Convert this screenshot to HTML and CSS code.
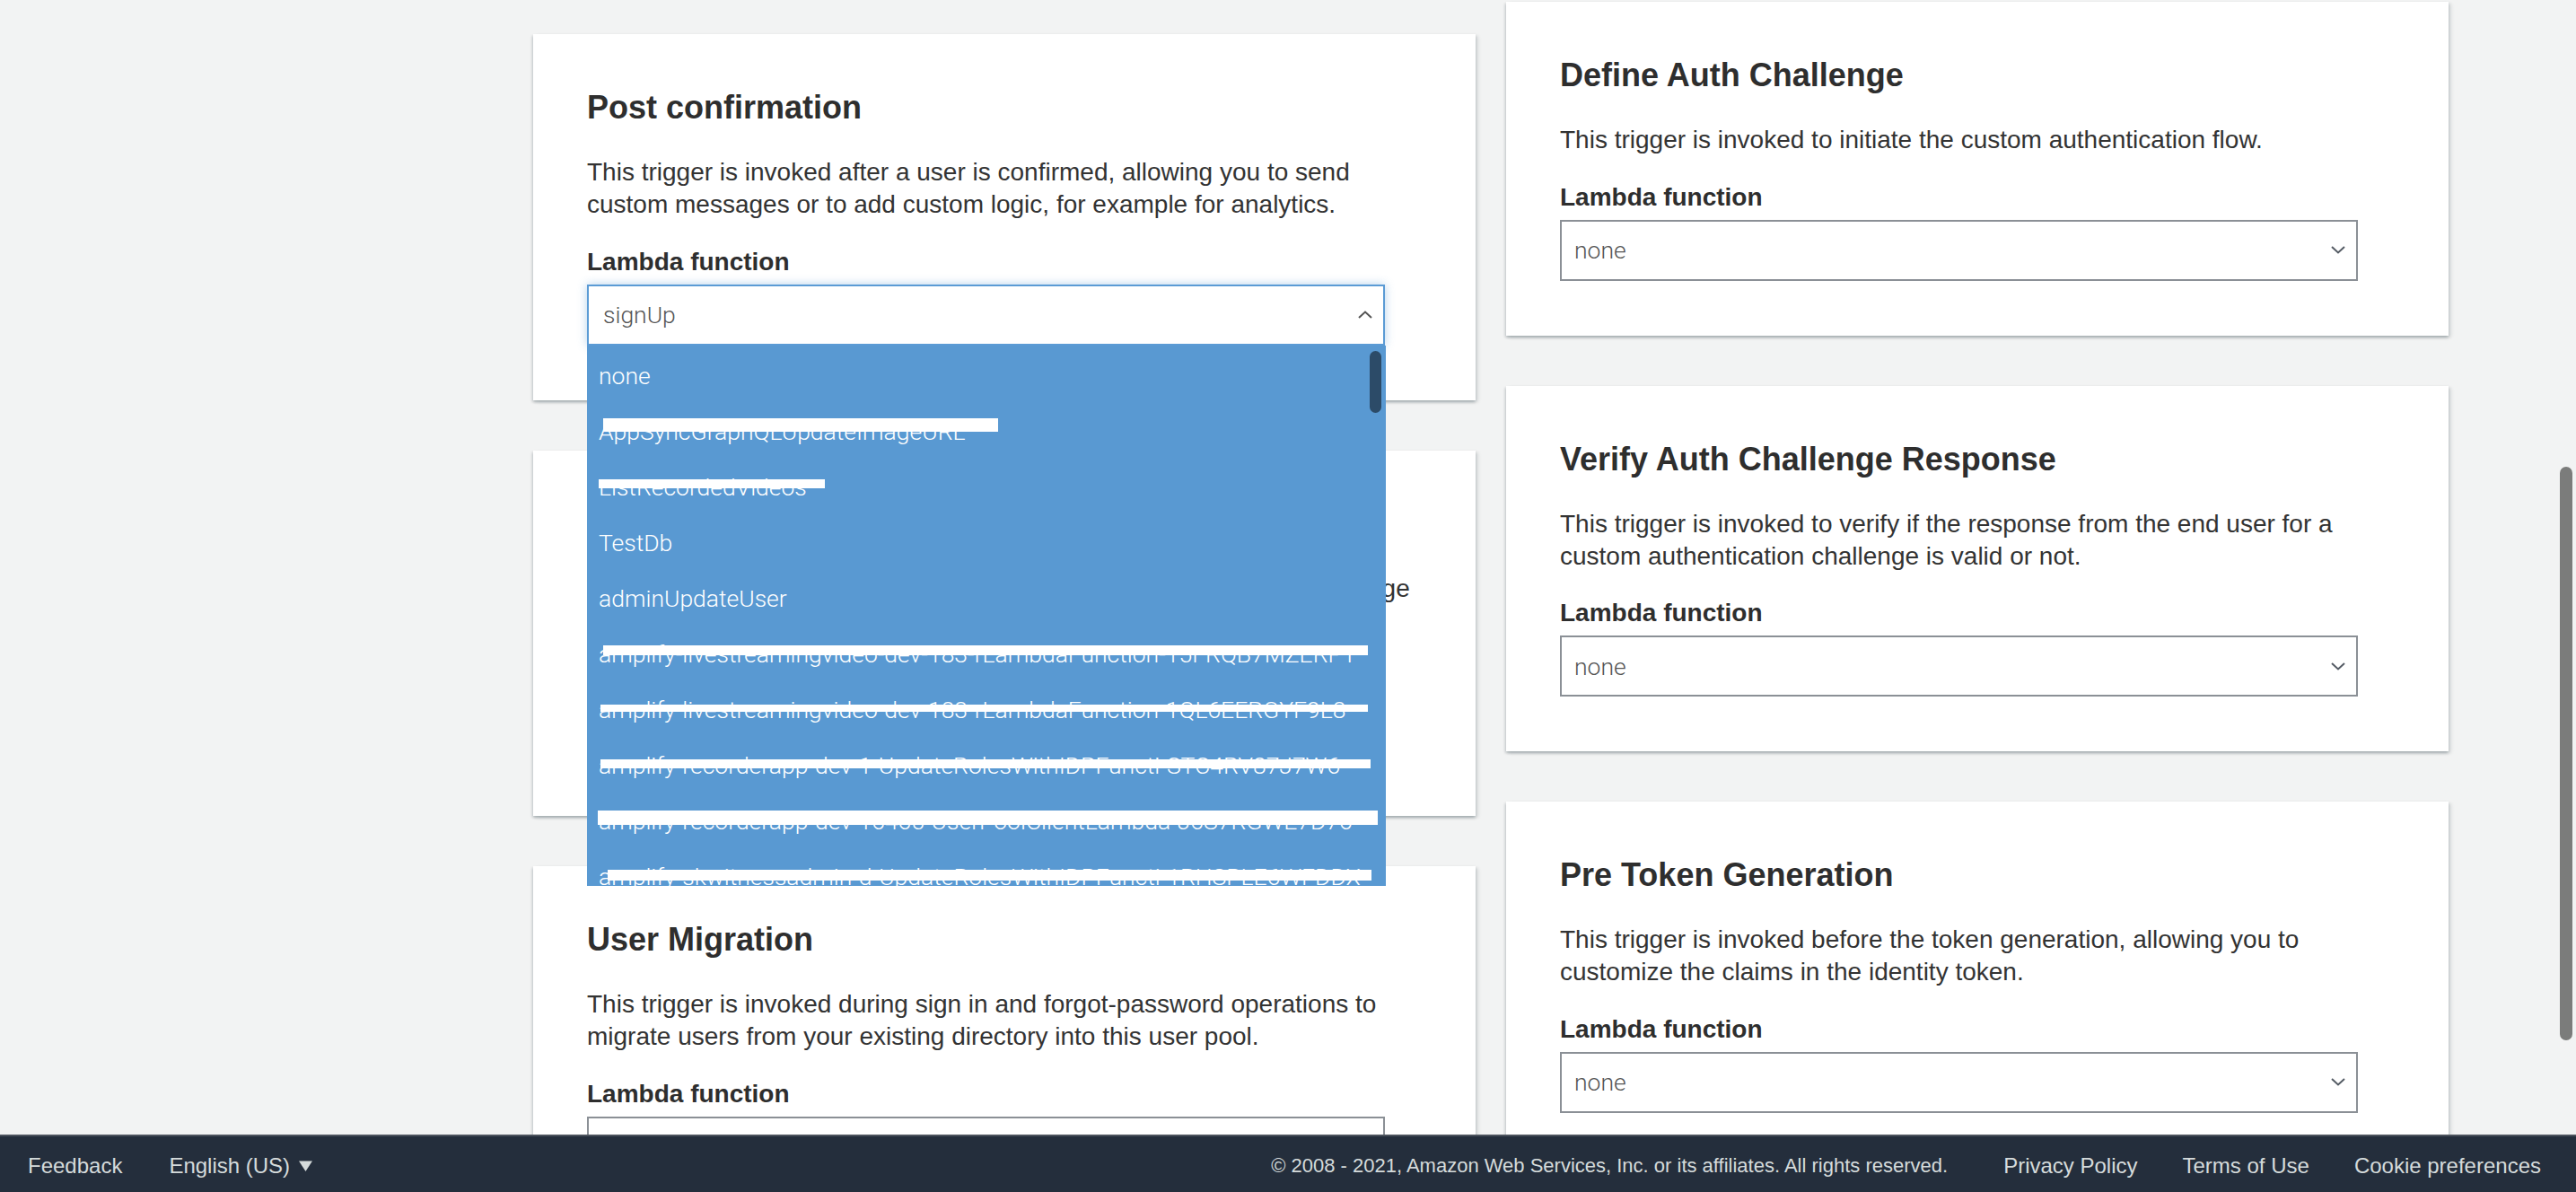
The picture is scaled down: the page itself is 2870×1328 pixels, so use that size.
FILE: index.html
```html
<!DOCTYPE html>
<html lang="en">

<head>
    <meta charset="UTF-8">
    <meta name="viewport" content="width=device-width, initial-scale=1.0">
    <title>Triggers</title>
    <link rel="stylesheet" href="styles.css">
</head>
<body>
    <div class="console">
        <main class="triggers">
            <div class="col col-left">
                <section class="card">
                    <h2>Post confirmation</h2>
                    <p>This trigger is invoked after a user is confirmed, allowing you to send custom messages or to add custom logic, for example for analytics.</p>
                    <label>Lambda function</label>
                    <div class="select-wrap">
                        <div class="select open">
                            <span>signUp</span>
                            <svg width="16" height="9" viewBox="0 0 16 9"><path d="M1 8 L8 1.5 L15 8" fill="none" stroke="#545454" stroke-width="2"/></svg>
                        </div>
                        <div class="dropdown">
                            <ul class="options">
                                <li>none</li>
                                <li>AppSyncGraphQLUpdateImageURL<span class="redact r1"></span></li>
                                <li>ListRecordedVideos<span class="redact r2"></span></li>
                                <li>TestDb</li>
                                <li>adminUpdateUser</li>
                                <li>amplify-livestreamingvideo-dev-183-rLambdaFunction-15FRQB7MZERPT<span class="redact r3"></span></li>
                                <li>amplify-livestreamingvideo-dev-183-rLambdaFunction-1QL6EERGYF9L8<span class="redact r4"></span></li>
                                <li>amplify-recorderapp-dev-1-UpdateRolesWithIDPFuncti-STC4RV87J7W6<span class="redact r5"></span></li>
                                <li>amplify-recorderapp-dev-16465-UserPoolClientLambda-J6S7RGWE7D76<span class="redact r6"></span></li>
                                <li>amplify-skwitnessadmin-d-UpdateRolesWithIDPFuncti-1RHSPLE6WFDDX<span class="redact r7"></span></li>
                                <li>amplify-skwitnessadmin-d-UserPoolClientLambda-9KQ2MW3ZT1AB</li>
                            </ul>
                            <div class="list-thumb"></div>
                        </div>
                    </div>
                </section>

                <section class="card">
                    <h2>Create Auth Challenge</h2>
                    <p>This trigger is invoked after Define Auth Challenge if the custom challenge has been specified as part of the Define Auth Challenge trigger.</p>
                    <label>Lambda function</label>
                    <div class="select">
                        <span>none</span>
                        <svg width="16" height="9" viewBox="0 0 16 9"><path d="M1 1 L8 7.5 L15 1" fill="none" stroke="#545b64" stroke-width="2"/></svg>
                    </div>
                </section>

                <section class="card">
                    <h2>User Migration</h2>
                    <p>This trigger is invoked during sign in and forgot-password operations to migrate users from your existing directory into this user pool.</p>
                    <label>Lambda function</label>
                    <div class="select">
                        <span>none</span>
                        <svg width="16" height="9" viewBox="0 0 16 9"><path d="M1 1 L8 7.5 L15 1" fill="none" stroke="#545b64" stroke-width="2"/></svg>
                    </div>
                </section>
            </div>

            <div class="col col-right">
                <section class="card">
                    <h2>Define Auth Challenge</h2>
                    <p>This trigger is invoked to initiate the custom authentication flow.</p>
                    <label>Lambda function</label>
                    <div class="select">
                        <span>none</span>
                        <svg width="16" height="9" viewBox="0 0 16 9"><path d="M1 1 L8 7.5 L15 1" fill="none" stroke="#545b64" stroke-width="2"/></svg>
                    </div>
                </section>

                <section class="card">
                    <h2>Verify Auth Challenge Response</h2>
                    <p>This trigger is invoked to verify if the response from the end user for a custom authentication challenge is valid or not.</p>
                    <label>Lambda function</label>
                    <div class="select">
                        <span>none</span>
                        <svg width="16" height="9" viewBox="0 0 16 9"><path d="M1 1 L8 7.5 L15 1" fill="none" stroke="#545b64" stroke-width="2"/></svg>
                    </div>
                </section>

                <section class="card">
                    <h2>Pre Token Generation</h2>
                    <p>This trigger is invoked before the token generation, allowing you to customize the claims in the identity token.</p>
                    <label>Lambda function</label>
                    <div class="select">
                        <span>none</span>
                        <svg width="16" height="9" viewBox="0 0 16 9"><path d="M1 1 L8 7.5 L15 1" fill="none" stroke="#545b64" stroke-width="2"/></svg>
                    </div>
                </section>
            </div>
        </main>

        <footer class="footer">
            <div class="footer-left">
                <a>Feedback</a>
                <a class="lang">English (US)
                    <svg width="17" height="14" viewBox="0 0 17 14"><path d="M1 1.5 L16 1.5 L8.5 13 Z" fill="#d5dbdb"/></svg>
                </a>
            </div>
            <div class="footer-right">
                <span class="copyright">&copy; 2008 - 2021, Amazon Web Services, Inc. or its affiliates. All rights reserved.</span>
                <a class="first">Privacy Policy</a>
                <a>Terms of Use</a>
                <a>Cookie preferences</a>
            </div>
        </footer>
    </div>

    <div class="page-thumb"></div>
</body>

</html>
```

FILE: styles.css
```css
html, body {
    margin: 0;
    height: 100%;
}

body {
    font-family: "Liberation Sans", Arial, sans-serif;
    background-color: #f2f3f3;
    color: #333;
    overflow: hidden;
}

.console {
    height: 100vh;
    display: flex;
    flex-direction: column;
}

.triggers {
    flex: 1;
    min-height: 0;
    overflow: hidden;
    display: flex;
    gap: 34px;
    padding-left: 594px;
}

.col {
    width: 1050px;
    flex-shrink: 0;
    display: flex;
    flex-direction: column;
    gap: 56px;
}

.col-left {
    padding-top: 38px;
}

.col-right {
    padding-top: 2px;
}

.card {
    background-color: #fff;
    padding: 60px 60px 61px;
    box-shadow: 0 2px 3px rgba(0, 28, 36, 0.22), 3px 2px 4px rgba(0, 28, 36, 0.1), -2px 2px 3px rgba(0, 28, 36, 0.07);
}

.card h2 {
    margin: 0;
    font-size: 36px;
    line-height: 44px;
    font-weight: bold;
    color: #2e2e2e;
}

.card p {
    margin: 32px 0 0;
    font-size: 28px;
    line-height: 36px;
}

.card label {
    display: block;
    margin-top: 27.5px;
    font-size: 28px;
    line-height: 36px;
    font-weight: bold;
    color: #2e2e2e;
}

.select-wrap {
    position: relative;
    width: 889px;
}

.select {
    margin-top: 7px;
    width: 889px;
    height: 68px;
    box-sizing: border-box;
    border: 2px solid #8b9096;
    background-color: #fff;
    display: flex;
    align-items: center;
    justify-content: space-between;
    padding: 0 12px 0 14px;
    font-family: Roboto, "Liberation Sans", sans-serif;
    font-weight: 300;
    font-size: 26.5px;
    color: #555;
}

.select svg {
    display: block;
}

.select.open {
    border-color: #5b9bd5;
    box-shadow: 0 0 10px rgba(91, 155, 213, 0.45);
    padding-left: 16px;
}

/* open option list of the first select */
.dropdown {
    position: absolute;
    top: 100%;
    left: 0;
    width: 890px;
    height: 602px;
    z-index: 5;
    background-color: #5999d2;
    overflow: hidden;
}

.options {
    list-style: none;
    margin: 0;
    padding: 3px 0 0;
}

.options li {
    position: relative;
    height: 62.1px;
    line-height: 62.1px;
    padding-left: 13px;
    white-space: nowrap;
    overflow: hidden;
    font-family: Roboto, "Liberation Sans", sans-serif;
    font-weight: 300;
    font-size: 26.5px;
    color: #fff;
}

/* white strokes drawn over some function names */
.redact {
    position: absolute;
    background-color: #fff;
}

.r1 { top: 16px; height: 15px; left: 18px; width: 440px; }
.r2 { top: 22px; height: 10px; left: 13px; width: 252px; }
.r3 { top: 21px; height: 11px; left: 18px; width: 852px; }
.r4 { top: 25px; height: 8px; left: 15px; width: 855px; }
.r5 { top: 24px; height: 10px; left: 15px; width: 858px; }
.r6 { top: 19px; height: 16px; left: 12px; width: 869px; }
.r7 { top: 23px; height: 12px; left: 23px; width: 851px; }

.list-thumb {
    position: absolute;
    top: 6px;
    right: 5px;
    width: 13px;
    height: 69px;
    border-radius: 7px;
    background-color: #2c4b68;
}

.footer {
    flex-shrink: 0;
    height: 64px;
    box-sizing: border-box;
    border-top: 2px solid #4b525c;
    background-color: #242e3c;
    display: flex;
    align-items: center;
    justify-content: space-between;
    padding: 4px 39px 0 31px;
    color: #d5dbdb;
    font-size: 24px;
    line-height: 24px;
}

.footer a {
    color: #d5dbdb;
    text-decoration: none;
}

.footer-left {
    display: flex;
    align-items: center;
    gap: 52px;
}

.lang {
    display: flex;
    align-items: center;
    gap: 9px;
}

.footer-right {
    display: flex;
    align-items: center;
    gap: 50px;
}

.copyright {
    font-size: 22px;
}

.footer-right .first {
    margin-left: 12px;
}

.page-thumb {
    position: absolute;
    top: 520px;
    right: 4px;
    width: 14px;
    height: 639px;
    border-radius: 7px;
    background-color: #7b7c7b;
}
```
